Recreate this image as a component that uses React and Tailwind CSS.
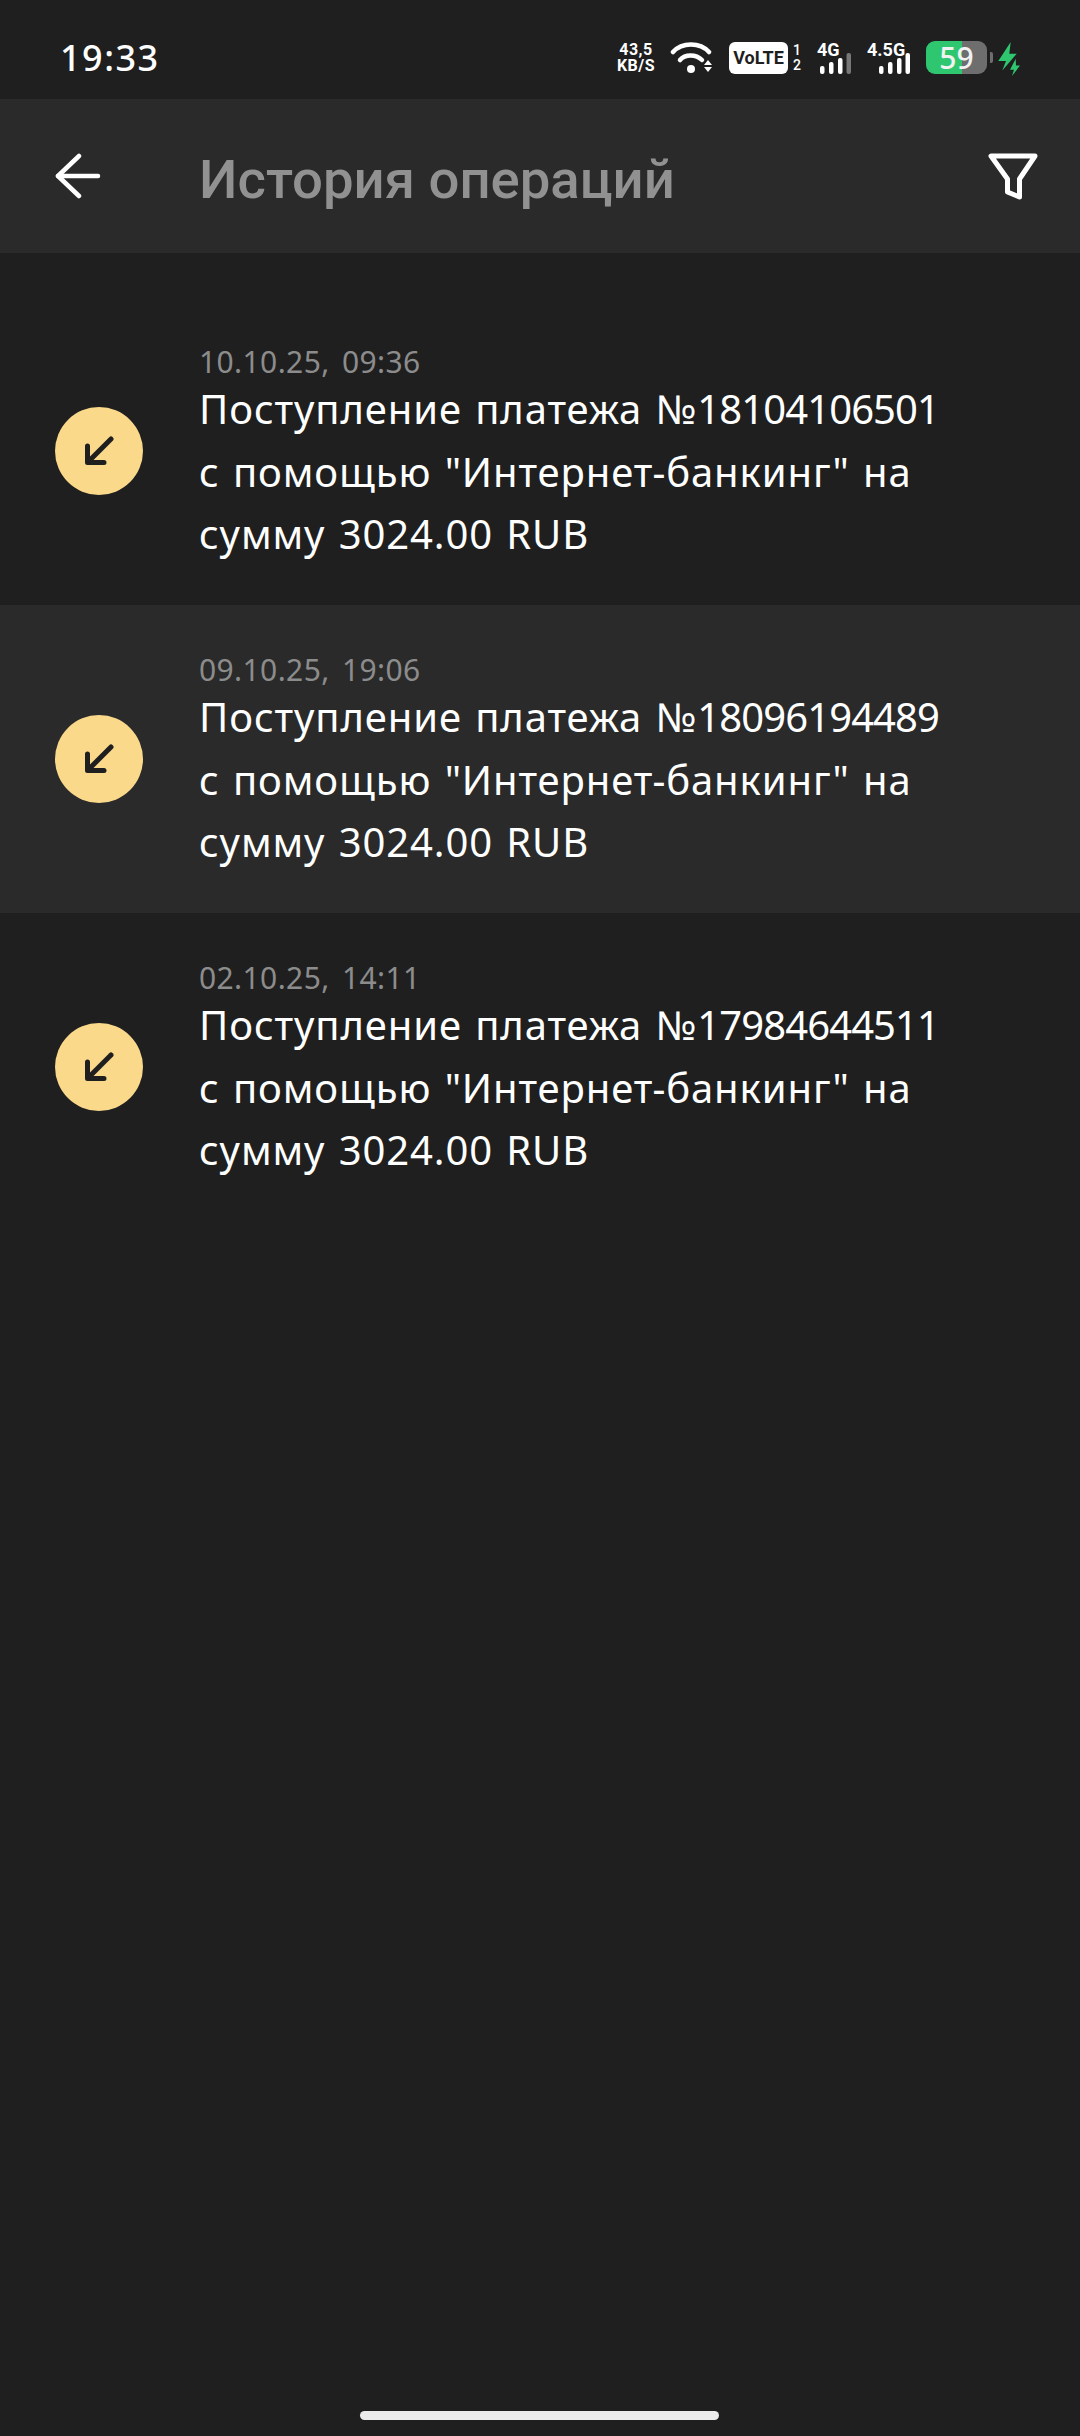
import React from "react";

const rows = [
  { date: "10.10.25, 09:36", num: "18104106501" },
  { date: "09.10.25, 19:06", num: "18096194489", alt: true },
  { date: "02.10.25, 14:11", num: "17984644511" },
];

const SignalBars = ({ last }) => (
  <svg width="32" height="21" viewBox="0 0 32 21">
    <rect x="1" y="13" width="4.5" height="8" rx="2" fill="#fff" />
    <rect x="10" y="9" width="4.5" height="12" rx="2" fill="#fff" />
    <rect x="19" y="5" width="4.5" height="16" rx="2" fill="#fff" />
    <rect x="27.5" y="0" width="4.5" height="21" rx="2" fill={last} />
  </svg>
);

const StatusBar = () => (
  <div className="h-[99px] flex items-center justify-between pl-[60px] pr-[58px] bg-[#1f1f1f]">
    <span className="text-[36px] leading-none text-white font-medium font-['Noto_Sans',sans-serif] tracking-[1.5px] mt-[16px]">
      19:33
    </span>
    <div className="flex items-center mt-[16px]">
      {/* net speed */}
      <div className="w-[40px] flex flex-col items-center text-white font-['Roboto',sans-serif] font-bold text-[16px] leading-[16px] tracking-[0.5px] whitespace-nowrap mr-[14px]">
        <span>43,5</span>
        <span>KB/S</span>
      </div>
      {/* wifi */}
      <svg width="44" height="34" viewBox="0 0 44 34" className="mr-[15px]">
        <g fill="none" stroke="#fff" strokeWidth="4.5" strokeLinecap="round">
          <path d="M3 11 C12 1 30 1 39 11" />
          <path d="M10 19 C15 13 26 13 32 19" />
        </g>
        <circle cx="21" cy="28" r="4" fill="#fff" />
        <path d="M38 19 L42 24 H34 Z M34 26 H42 L38 31 Z" fill="#fff" />
      </svg>
      {/* volte */}
      <div className="w-[59px] h-[32px] rounded-[6px] bg-white flex items-center justify-center text-[#1f1f1f] font-['Roboto',sans-serif] font-bold text-[18px] leading-none mr-[5px]">
        VoLTE
      </div>
      <div className="flex flex-col items-center w-[8px] text-white font-['Roboto',sans-serif] font-medium text-[14px] leading-[15px] mr-[16px]">
        <span>1</span>
        <span>2</span>
      </div>
      {/* 4G */}
      <div className="relative w-[34px] h-[32px] mr-[16px]">
        <span className="absolute left-0 top-[-1px] text-white font-['Roboto',sans-serif] font-bold text-[18px] leading-none">4G</span>
        <div className="absolute right-0 bottom-0 flex">
          <SignalBars last="#777777" />
        </div>
      </div>
      {/* 4.5G */}
      <div className="relative w-[43px] h-[32px] mr-[16px]">
        <span className="absolute left-0 top-[-1px] text-white font-['Roboto',sans-serif] font-bold text-[18px] leading-none">4.5G</span>
        <div className="absolute right-0 bottom-0 flex">
          <SignalBars last="#ffffff" />
        </div>
      </div>
      {/* battery */}
      <div className="w-[61px] h-[33px] rounded-[9px] bg-[linear-gradient(90deg,#2ec76f_36px,#6e6e6e_36px)] flex items-center justify-center text-[#f2f2f2] font-medium font-['Noto_Sans',sans-serif] text-[30px] leading-none mr-[3px]">
        59
      </div>
      <div className="w-[3px] h-[11px] rounded-r-[2px] bg-[#6e6e6e] mr-[5px]" />
      <svg width="24" height="36" viewBox="0 0 24 36">
        <path d="M12.7 2 L0.3 21 H8 L4.3 30.5 L18.7 13.8 H11.3 Z" fill="#2ec76f" />
        <path d="M17.7 18.8 L12 29.8 H16 L14 36 L22 25.5 H18 Z" fill="#2ec76f" />
      </svg>
    </div>
  </div>
);

const Toolbar = () => (
  <div className="h-[154px] flex items-center bg-[#2a2a2a]">
    <div className="w-[199px] flex pl-[55px] shrink-0">
      <svg width="46" height="46" viewBox="0 0 46 46" fill="none" stroke="#fff" strokeWidth="4.5" strokeLinecap="round" strokeLinejoin="round">
        <path d="M43 23 H3" />
        <path d="M24 3 L3 23 L24 43" />
      </svg>
    </div>
    <h1 className="flex-1 text-[54.5px] leading-none font-medium text-[#919191] font-['Roboto',sans-serif] mt-[6px]">
      История операций
    </h1>
    <svg width="52" height="48" viewBox="0 0 52 48" fill="none" stroke="#fff" strokeWidth="5" strokeLinejoin="round" strokeLinecap="round" className="mr-[41px]">
      <path d="M4 4 H48 L32.5 27 V45 L20.5 40 V27 Z" />
    </svg>
  </div>
);

const Row = ({ date, num, alt }) => (
  <div className={`h-[308px] flex items-center ${alt ? "bg-[#2a2a2a]" : "bg-[#1f1f1f]"}`}>
    <div className="w-[199px] shrink-0 pl-[55px]">
      <div className="w-[88px] h-[88px] rounded-full bg-[#fbd98b] flex items-center justify-center">
        <svg width="30" height="30" viewBox="0 0 30 30" fill="none" stroke="#1f1f1f" strokeWidth="5" strokeLinecap="round" strokeLinejoin="round">
          <path d="M27 3 L5 25" />
          <path d="M3.5 10 V26.5 H20" />
        </svg>
      </div>
    </div>
    <div className="flex flex-col font-['Noto_Sans',sans-serif] text-white text-[40px] leading-[62.6px] tracking-[0.9px] [word-spacing:2px] mt-[9px]">
      <span className="text-[30px] leading-[33px] tracking-[0.4px] [word-spacing:4px] text-[#8c8c8c]">{date}</span>
      <span>
        Поступление платежа №<span className="tracking-[-0.9px]">{num}</span>
      </span>
      <span>с помощью "Интернет-банкинг" на</span>
      <span>сумму 3024.00 RUB</span>
    </div>
  </div>
);

export default function App() {
  return (
    <div className="w-[1080px] h-[2436px] relative overflow-hidden bg-[#1f1f1f]">
      <StatusBar />
      <Toolbar />
      <div className="pt-[44px]">
        {rows.map((r) => (
          <Row key={r.date} {...r} />
        ))}
      </div>
      {/* gesture bar */}
      <div className="absolute left-[360px] bottom-[16px] w-[359px] h-[9px] rounded-full bg-[#ececec]" />
    </div>
  );
}
